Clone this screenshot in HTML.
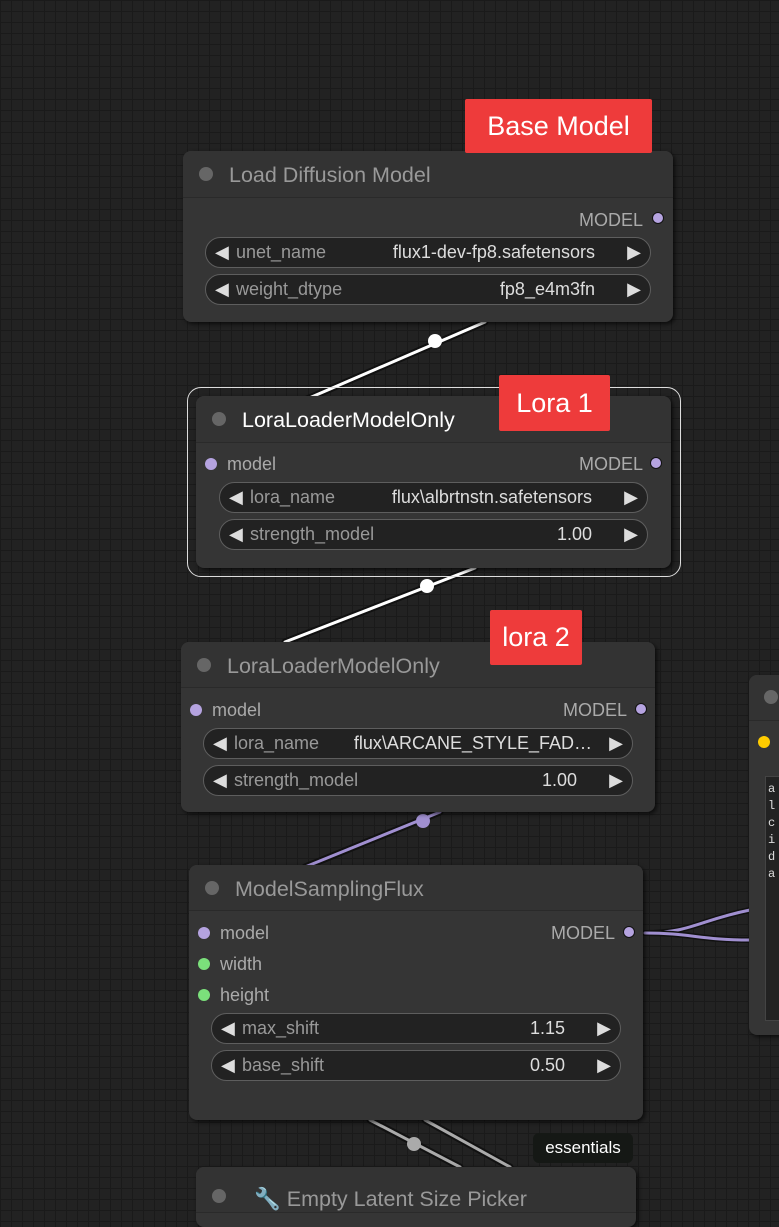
<!DOCTYPE html>
<html><head><meta charset="utf-8"><style>
*{box-sizing:border-box;margin:0;padding:0}
body{width:779px;height:1187px;overflow:hidden;position:relative;font-family:"Liberation Sans",sans-serif;
background-color:#222;
background-image:linear-gradient(#1a1a1a 1px,transparent 1px),linear-gradient(90deg,#1a1a1a 1px,transparent 1px);
background-size:11px 11px;}
.node{position:absolute;background:#353535;border-radius:8px;box-shadow:2px 2px 4px #000a;}
.title{position:absolute;left:0;right:0;top:0;background:#333;border-bottom:1px solid #2a2a2a;border-radius:8px 8px 0 0;color:#999;font-size:21.5px;}
.title .dot{position:absolute;width:14px;height:14px;border-radius:50%;background:#666;}
.t{position:absolute;font-size:18px;color:#aaa;white-space:nowrap}
.w{position:absolute;background:#222;border:1.5px solid #5e5e5e;border-radius:16px;height:31px;font-size:18px;}
.w .l{position:absolute;left:9px;top:4px;color:#ddd;font-size:18px}
.w .n{position:absolute;left:30px;top:4px;color:#999}
.w .v{position:absolute;right:55px;top:4px;color:#ddd}
.w .r{position:absolute;right:9px;top:4px;color:#ddd;font-size:18px}
.s{position:absolute;width:12px;height:12px;border-radius:50%;border:1.5px solid #111}
.lab{position:absolute;background:#ee3b3b;color:#fff;font-size:27px;text-align:center;border-radius:2px}
</style></head><body>
<svg width="779" height="1187" style="position:absolute;left:0;top:0">
<g stroke-linecap="round" fill="none">
<line x1="300" y1="402" x2="485" y2="322" stroke="#111" stroke-width="7"/>
<line x1="300" y1="402" x2="485" y2="322" stroke="#fff" stroke-width="3"/>
<line x1="285" y1="642" x2="475" y2="568" stroke="#111" stroke-width="7"/>
<line x1="285" y1="642" x2="475" y2="568" stroke="#fff" stroke-width="3"/>
<line x1="305" y1="867" x2="440" y2="812" stroke="#111" stroke-width="7"/>
<line x1="305" y1="867" x2="440" y2="812" stroke="#a08fd0" stroke-width="3"/>
<line x1="370" y1="1120" x2="460" y2="1167" stroke="#111" stroke-width="7"/>
<line x1="370" y1="1120" x2="460" y2="1167" stroke="#aaa" stroke-width="3"/>
<line x1="425" y1="1120" x2="510" y2="1167" stroke="#111" stroke-width="7"/>
<line x1="425" y1="1120" x2="510" y2="1167" stroke="#aaa" stroke-width="3"/>
<path d="M645 933 C690 933 700 920 750 910" stroke="#111" stroke-width="6"/>
<path d="M645 933 C690 933 700 920 750 910" stroke="#a08fd0" stroke-width="3"/>
<path d="M645 933 C690 933 700 940 750 940" stroke="#111" stroke-width="6"/>
<path d="M645 933 C690 933 700 940 750 940" stroke="#a08fd0" stroke-width="3"/>
</g>
<circle cx="435" cy="341" r="7" fill="#fff"/>
<circle cx="427" cy="586" r="7" fill="#fff"/>
<circle cx="423" cy="821" r="7" fill="#a08fd0"/>
<circle cx="414" cy="1144" r="7" fill="#aaa"/>
</svg>

<!-- Node 1 -->
<div class="node" style="left:183px;top:151px;width:490px;height:171px">
 <div class="title" style="height:47px"><div class="dot" style="left:16px;top:16px"></div><span style="position:absolute;left:46px;top:12px">Load Diffusion Model</span></div>
 <div class="t" style="right:30px;top:59px">MODEL</div><div class="s" style="left:469px;top:61px;background:#b5a3e0"></div>
 <div class="w" style="left:22px;top:86px;width:446px"><span class="l">◀</span><span class="n">unet_name</span><span class="v">flux1-dev-fp8.safetensors</span><span class="r">▶</span></div>
 <div class="w" style="left:22px;top:123px;width:446px"><span class="l">◀</span><span class="n">weight_dtype</span><span class="v">fp8_e4m3fn</span><span class="r">▶</span></div>
</div>
<div class="lab" style="left:465px;top:99px;width:187px;height:54px;line-height:54px">Base Model</div>

<!-- Lora 1 -->
<div style="position:absolute;left:187px;top:387px;width:494px;height:190px;border:1.5px solid #ddd;border-radius:14px"></div>
<div class="node" style="left:196px;top:396px;width:475px;height:172px">
 <div class="title" style="height:47px;color:#fff"><div class="dot" style="left:16px;top:16px"></div><span style="position:absolute;left:46px;top:12px">LoraLoaderModelOnly</span></div>
 <div class="s" style="left:9px;top:62px;background:#b5a3e0;border:none"></div><div class="t" style="left:31px;top:58px">model</div>
 <div class="t" style="right:28px;top:58px">MODEL</div><div class="s" style="left:454px;top:61px;background:#b5a3e0"></div>
 <div class="w" style="left:23px;top:86px;width:429px"><span class="l">◀</span><span class="n">lora_name</span><span class="v">flux\albrtnstn.safetensors</span><span class="r">▶</span></div>
 <div class="w" style="left:23px;top:123px;width:429px"><span class="l">◀</span><span class="n">strength_model</span><span class="v">1.00</span><span class="r">▶</span></div>
</div>
<div class="lab" style="left:499px;top:375px;width:111px;height:56px;line-height:56px">Lora 1</div>

<!-- Lora 2 -->
<div class="node" style="left:181px;top:642px;width:474px;height:170px">
 <div class="title" style="height:46px"><div class="dot" style="left:16px;top:16px"></div><span style="position:absolute;left:46px;top:12px">LoraLoaderModelOnly</span></div>
 <div class="s" style="left:9px;top:62px;background:#b5a3e0;border:none"></div><div class="t" style="left:31px;top:58px">model</div>
 <div class="t" style="right:28px;top:58px">MODEL</div><div class="s" style="left:454px;top:61px;background:#b5a3e0"></div>
 <div class="w" style="left:22px;top:86px;width:430px"><span class="l">◀</span><span class="n">lora_name</span><span class="v" style="right:40px">flux\ARCANE_STYLE_FAD…</span><span class="r">▶</span></div>
 <div class="w" style="left:22px;top:123px;width:430px"><span class="l">◀</span><span class="n">strength_model</span><span class="v">1.00</span><span class="r">▶</span></div>
</div>
<div class="lab" style="left:490px;top:610px;width:92px;height:55px;line-height:55px">lora 2</div>

<!-- ModelSamplingFlux -->
<div class="node" style="left:189px;top:865px;width:454px;height:255px">
 <div class="title" style="height:46px"><div class="dot" style="left:16px;top:16px"></div><span style="position:absolute;left:46px;top:12px">ModelSamplingFlux</span></div>
 <div class="s" style="left:9px;top:62px;background:#b5a3e0;border:none"></div><div class="t" style="left:31px;top:58px">model</div>
 <div class="s" style="left:9px;top:93px;background:#7be07b;border:none"></div><div class="t" style="left:31px;top:89px">width</div>
 <div class="s" style="left:9px;top:124px;background:#7be07b;border:none"></div><div class="t" style="left:31px;top:120px">height</div>
 <div class="t" style="right:28px;top:58px">MODEL</div><div class="s" style="left:434px;top:61px;background:#b5a3e0"></div>
 <div class="w" style="left:22px;top:148px;width:410px"><span class="l">◀</span><span class="n">max_shift</span><span class="v">1.15</span><span class="r">▶</span></div>
 <div class="w" style="left:22px;top:185px;width:410px"><span class="l">◀</span><span class="n">base_shift</span><span class="v">0.50</span><span class="r">▶</span></div>
</div>

<!-- right node -->
<div class="node" style="left:749px;top:675px;width:40px;height:360px">
 <div class="title" style="height:46px"><div class="dot" style="left:15px;top:15px"></div></div>
 <div class="s" style="left:9px;top:61px;background:#ffcc00;border:none"></div>
 <div style="position:absolute;left:16px;top:101px;width:30px;height:245px;background:#222;border:1px solid #444;font-family:'Liberation Mono',monospace;font-size:12px;color:#ddd;line-height:17px;padding:4px 2px">a<br>l<br>c<br>i<br>d<br>a</div>
</div>

<!-- bottom -->
<div style="position:absolute;left:533px;top:1133px;width:100px;height:30px;background:#151815;border-radius:6px;color:#fff;font-size:17px;text-align:center;line-height:30px">essentials</div>
<div class="node" style="left:196px;top:1167px;width:440px;height:60px">
 <div class="title" style="height:46px"><div class="dot" style="left:16px;top:22px"></div><span style="position:absolute;left:58px;top:20px">🔧 Empty Latent Size Picker</span></div>
</div>
</body></html>
